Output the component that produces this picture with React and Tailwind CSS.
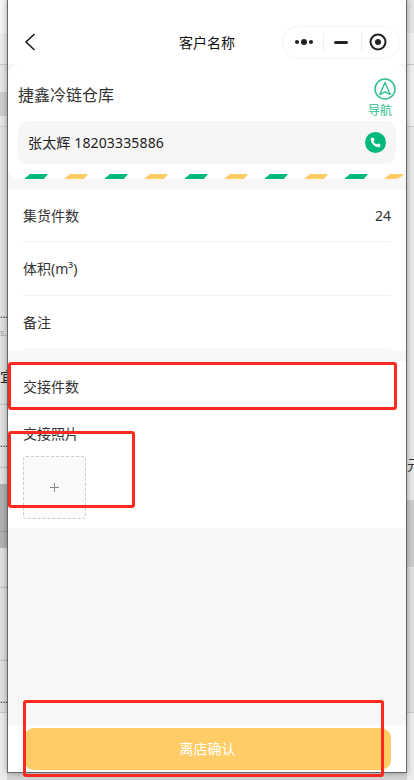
import { Phone } from "lucide-react";

const STRIPES = ["#00b97a", "#ffcc66", "#00b97a", "#ffcc66", "#00b97a", "#ffcc66", "#00b97a", "#ffcc66", "#00b97a", "#ffcc66"];

/* =========================================
   PAGE BEHIND THE PHONE FRAME
========================================= */
const Dots = ({ color }) => (
  <div className={`h-[12px] text-[10px] leading-[6px] ${color}`}>...</div>
);

const LeftEdge = () => (
  <div className="w-[7px] h-full flex flex-col overflow-hidden flex-shrink-0">
    <div className="h-[33px] bg-[#f6f6f6]" />
    <div className="h-[32px] bg-[#ececec] border-b border-[#c8c8c8]" />
    <div className="h-[27px] bg-[#e6e6e6]" />
    <div className="h-[24px] bg-[#cdcdcd]" />
    <div className="h-[11px] bg-[#e6e6e6] border-b border-[#d0d0d0]" />
    <div className="h-[357px] bg-[#e2e2e2] flex flex-col">
      <div className="h-[184px]" />
      <Dots color="text-[#222]" />
      <div className="h-[20px] text-[9px] leading-[20px] text-[#999]">s..</div>
      <div className="h-[24px]" />
      <div className="h-[20px] text-[14px] leading-[20px] text-[#222] whitespace-nowrap">宜</div>
      <div className="h-[11px]" />
      <Dots color="text-[#999]" />
      <div className="h-[30px]" />
      <Dots color="text-[#222]" />
      <div className="h-[9px]" />
      <Dots color="text-[#999]" />
      <div className="h-[11px]" />
    </div>
    <div className="h-[64px] bg-[#b2b2b2] flex flex-col">
      <div className="h-[41px]" />
      <Dots color="text-[#888]" />
    </div>
    <div className="h-[165px] bg-[#e0e0e0] border-b border-[#c8c8c8] flex flex-col">
      <div className="h-[33px]" />
      <Dots color="text-[#999]" />
      <div className="h-[61px]" />
      <Dots color="text-[#999]" />
      <div className="h-[30px]" />
      <Dots color="text-[#222]" />
    </div>
    <div className="flex-1 bg-[#ececec]" />
  </div>
);

const RightEdge = () => (
  <div className="w-[7px] h-full flex flex-col overflow-hidden flex-shrink-0">
    <div className="h-[33px] bg-[#e4e4e4]" />
    <div className="h-[32px] bg-[#efefef] border-b border-[#c8c8c8]" />
    <div className="h-[62px] bg-[#f0f0f0] border-b border-[#d0d0d0]" />
    <div className="h-[373px] bg-[#e8e8e8] flex flex-col">
      <div className="h-[328px]" />
      <div className="h-[20px] text-[14px] leading-[20px] text-[#333] whitespace-nowrap">元</div>
    </div>
    <div className="h-[68px] bg-[#cccccc] border-b border-[#e4e4e4]" />
    <div className="h-[145px] bg-[#dedede] border-b border-[#c8c8c8]" />
    <div className="flex-1 bg-[#ececec]" />
  </div>
);

/* =========================================
   HEADER
========================================= */
const Header = () => (
  <div className="h-[64px] pt-[20px] grid grid-cols-[1fr_auto_1fr] items-center bg-white">
    <div className="pl-[16px]">
      <svg width="12" height="18" viewBox="0 0 12 18" fill="none" stroke="#111" strokeWidth="1.5">
        <path d="M10.5 1 L2 9 L10.5 17" />
      </svg>
    </div>
    <div className="text-[14px] text-[#111]">客户名称</div>
    <div className="flex justify-end pr-[6px]">
      <div className="w-[118px] h-[33px] rounded-full border border-[#f4f4f4] flex items-center">
        <div className="w-[40px] flex justify-center items-center gap-[2px] pl-[1px]">
          <span className="w-[4px] h-[4px] rounded-full bg-[#222]" />
          <span className="w-[6px] h-[6px] rounded-full bg-[#222]" />
          <span className="w-[4px] h-[4px] rounded-full bg-[#222]" />
        </div>
        <div className="w-px h-[18px] bg-[#eeeeee]" />
        <div className="w-[37px] pr-[3px] flex justify-center">
          <span className="w-[14px] h-[3px] rounded-full bg-[#222]" />
        </div>
        <div className="w-px h-[18px] bg-[#eeeeee]" />
        <div className="flex-1 pr-[5px] flex justify-center">
          <svg width="18" height="18" viewBox="0 0 18 18" fill="none">
            <circle cx="9" cy="9" r="7.5" stroke="#222" strokeWidth="2" />
            <circle cx="9" cy="9" r="3" fill="#222" />
          </svg>
        </div>
      </div>
    </div>
  </div>
);

/* =========================================
   WAREHOUSE CARD
========================================= */
const WarehouseCard = () => (
  <div className="h-[115px] bg-white rounded-[12px] overflow-hidden flex flex-col">
    <div className="h-[57px] pl-[10px] pr-[14px] flex justify-between">
      <div className="pt-[19px] text-[16px] leading-[24px] text-[#333]">捷鑫冷链仓库</div>
      <div className="w-[24px] pt-[14px] flex flex-col items-center">
        <svg width="22" height="22" viewBox="0 0 22 22" fill="none" stroke="#2cc08c" className="ml-[9px] flex-shrink-0">
          <circle cx="11" cy="11" r="10" strokeWidth="1.5" />
          <path d="M11 4.5 L5.8 16.5 L11 13.8 L16.2 16.5 Z" strokeWidth="1.4" strokeLinejoin="round" />
        </svg>
        <div className="text-[12px] leading-[16px] text-[#2cc08c] whitespace-nowrap mt-[3px]">导航</div>
      </div>
    </div>
    <div className="mx-[10px] h-[43px] rounded-[10px] bg-[#f6f6f6] flex items-center justify-between pl-[10px] pr-[10px]">
      <span className="text-[14px] text-[#222] tracking-[0.15px]">张太辉 18203335886</span>
      <span className="w-[21px] h-[21px] rounded-full bg-[#00b97a] flex items-center justify-center">
        <Phone size={11} color="#ffffff" fill="#ffffff" strokeWidth={1} />
      </span>
    </div>
    <div className="mt-[10px] h-[5px] pl-[16px] flex gap-[16px]">
      {STRIPES.map((color, index) => (
        <span
          key={index}
          className="w-[24px] h-[5px] flex-shrink-0 [clip-path:polygon(25%_0,100%_0,83%_100%,0_100%)]"
          style={{ backgroundColor: color }}
        />
      ))}
    </div>
  </div>
);

/* =========================================
   FORM ROWS
========================================= */
const InfoRow = ({ label, value, height }) => (
  <div className={`${height} flex items-center justify-between border-b border-[#f2f2f2] text-[14px] text-[#333]`}>
    <span>{label}</span>
    {value && <span>{value}</span>}
  </div>
);

/* =========================================
   MAIN SCREEN
========================================= */
const App = () => {
  return (
    <div className="relative w-[414px] h-[780px] bg-[#d4d4d4] overflow-hidden flex font-['Noto_Sans','Noto_Sans_CJK_SC',sans-serif]">
      <LeftEdge />

      <div className="relative z-10 w-[400px] h-[773px] flex-shrink-0 flex flex-col border-x border-b border-[#666666] bg-[#f7f7f7] shadow-[0_0_6px_rgba(0,0,0,0.35)]">
        <Header />
        <WarehouseCard />

        <div className="mt-[10px] bg-white px-[15px] pb-[1px]">
          <InfoRow label="集货件数" value="24" height="h-[53px]" />
          <InfoRow label="体积(m³)" height="h-[54px]" />
          <InfoRow label="备注" height="h-[54px]" />
        </div>

        <div className="mt-[10px] h-[167px] bg-white px-[15px] flex flex-col">
          <div className="h-[52px] pb-[2px] flex items-center text-[14px] text-[#333]">交接件数</div>
          <div className="h-[43px] pb-[2px] flex items-center text-[14px] text-[#333]">交接照片</div>
          <div className="w-[63px] h-[63px] rounded-[3px] border border-dashed border-[#cccccc] bg-[#fafafa] flex items-center justify-center">
            <svg width="9" height="9" viewBox="0 0 9 9" stroke="#888888" strokeWidth="1">
              <path d="M4.5 0 V9 M0 4.5 H9" />
            </svg>
          </div>
        </div>

        <div className="flex-1" />

        <div className="h-[47px] bg-white pl-[16px] pr-[15px] pt-[3px]">
          <button className="w-full h-[42px] pb-[1px] rounded-[10px] bg-[#ffcc66] text-white text-[14px]">离店确认</button>
        </div>
      </div>

      <RightEdge />

      {/* red marks drawn over the screenshot */}
      <div className="absolute z-20 left-[8px] top-[362px] w-[389px] h-[48px] border-[3px] border-[#ff2a1f] rounded-[3px]" />
      <div className="absolute z-20 left-[8px] top-[431px] w-[127px] h-[77px] border-[3px] border-[#ff2a1f] rounded-[3px]" />
      <div className="absolute z-20 left-[23px] top-[700px] w-[361px] h-[77px] border-[3px] border-[#ff2a1f] rounded-[3px]" />
    </div>
  );
};

export default App;
